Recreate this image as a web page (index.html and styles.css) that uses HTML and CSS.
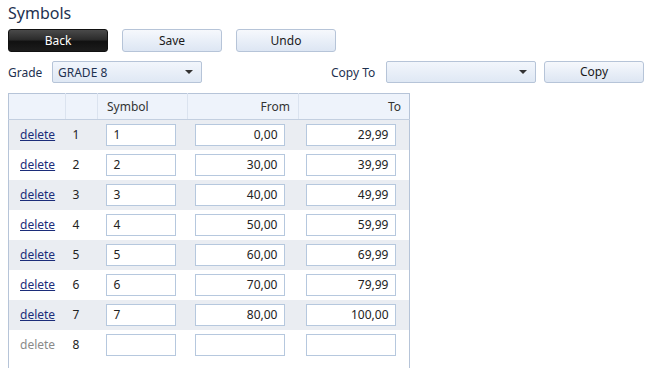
FILE: index.html
```html
<!DOCTYPE html>
<html>
<head>
<meta charset="utf-8">
<link rel="stylesheet" href="styles.css">
</head>
<body>
<div class="page">
  <div class="title">Symbols</div>
  <div class="toolbar">
    <button class="btn btn-dark">Back</button>
    <button class="btn">Save</button>
    <button class="btn">Undo</button>
  </div>
  <div class="filters">
    <span class="label label-grade">Grade</span>
    <div class="select"><span>GRADE 8</span><span class="caret"></span></div>
    <span class="label label-copy">Copy To</span>
    <div class="select"><span></span><span class="caret"></span></div>
    <button class="btn btn-copy">Copy</button>
  </div>
  <table class="grid">
    <thead>
      <tr>
        <th class="c-del"></th>
        <th class="c-num"></th>
        <th class="c-sym">Symbol</th>
        <th class="c-from">From</th>
        <th class="c-to">To</th>
      </tr>
    </thead>
    <tbody>
      <tr class="alt"><td class="c-del"><a href="#">delete</a></td><td class="c-num">1</td><td class="c-sym"><div class="inp">1</div></td><td class="c-from"><div class="inp num">0,00</div></td><td class="c-to"><div class="inp num">29,99</div></td></tr>
      <tr><td class="c-del"><a href="#">delete</a></td><td class="c-num">2</td><td class="c-sym"><div class="inp">2</div></td><td class="c-from"><div class="inp num">30,00</div></td><td class="c-to"><div class="inp num">39,99</div></td></tr>
      <tr class="alt"><td class="c-del"><a href="#">delete</a></td><td class="c-num">3</td><td class="c-sym"><div class="inp">3</div></td><td class="c-from"><div class="inp num">40,00</div></td><td class="c-to"><div class="inp num">49,99</div></td></tr>
      <tr><td class="c-del"><a href="#">delete</a></td><td class="c-num">4</td><td class="c-sym"><div class="inp">4</div></td><td class="c-from"><div class="inp num">50,00</div></td><td class="c-to"><div class="inp num">59,99</div></td></tr>
      <tr class="alt"><td class="c-del"><a href="#">delete</a></td><td class="c-num">5</td><td class="c-sym"><div class="inp">5</div></td><td class="c-from"><div class="inp num">60,00</div></td><td class="c-to"><div class="inp num">69,99</div></td></tr>
      <tr><td class="c-del"><a href="#">delete</a></td><td class="c-num">6</td><td class="c-sym"><div class="inp">6</div></td><td class="c-from"><div class="inp num">70,00</div></td><td class="c-to"><div class="inp num">79,99</div></td></tr>
      <tr class="alt"><td class="c-del"><a href="#">delete</a></td><td class="c-num">7</td><td class="c-sym"><div class="inp">7</div></td><td class="c-from"><div class="inp num">80,00</div></td><td class="c-to"><div class="inp num">100,00</div></td></tr>
      <tr><td class="c-del"><span class="disabled">delete</span></td><td class="c-num">8</td><td class="c-sym"><div class="inp"></div></td><td class="c-from"><div class="inp num"></div></td><td class="c-to"><div class="inp num"></div></td></tr>
      <tr class="spacer"><td colspan="5"></td></tr>
    </tbody>
  </table>
</div>
</body>
</html>
```

FILE: styles.css
```css
* { box-sizing: border-box; }
html, body { margin: 0; padding: 0; background: #ffffff; }
body {
  font-family: "Noto Sans", "Open Sans", "DejaVu Sans", sans-serif;
  font-size: 12px;
  color: #222;
}
.page { padding: 0 8px; }
.title {
  font-size: 16px;
  color: #1e3150;
  height: 29px;
  line-height: 26px;
}
.toolbar {
  display: flex;
  gap: 14px;
  height: 32px;
}
.btn {
  width: 100px;
  height: 23px;
  border: 1px solid #b6c4d8;
  border-radius: 3px;
  background: linear-gradient(#f6f8fc 0%, #e9eff8 50%, #dde6f3 100%);
  font-family: inherit;
  font-size: 12px;
  color: #1a1a1a;
  padding: 0;
  line-height: 20px;
}
.btn-dark {
  background: linear-gradient(#4a4a4a 0%, #2c2c2c 45%, #111 55%, #1c1c1c 100%);
  border-color: #111;
  color: #fff;
}
.filters {
  display: flex;
  align-items: center;
  height: 22px;
  margin-bottom: 10px;
}
.label { color: #1e3150; flex: none; }
.label-grade { width: 44px; }
.label-copy { width: 55px; margin-left: 129px; }
.select {
  display: flex;
  align-items: center;
  justify-content: space-between;
  width: 150px;
  height: 22px;
  border: 1px solid #b6c4d8;
  border-radius: 2px;
  background: linear-gradient(#f2f6fc, #dfe8f4);
  padding: 0 8px 0 5px;
  color: #1e3150;
}
.btn-copy { margin-left: 8px; height: 22px; }
.caret {
  width: 0; height: 0;
  border-left: 4px solid transparent;
  border-right: 4px solid transparent;
  border-top: 4px solid #333;
}
.grid {
  border-collapse: collapse;
  width: 402px;
  border: 1px solid #b6c4d8;
  border-bottom: none;
  table-layout: fixed;
}
.grid th {
  height: 26px;
  background: #eef3fb;
  font-weight: normal;
  color: #333;
  border-bottom: 1px solid #c3cfe0;
  border-left: 1px solid #dbe3ef;
  padding: 0;
  text-align: left;
  vertical-align: middle;
}
.grid th:first-child { border-left: none; }
.grid td { height: 30px; padding: 0; vertical-align: middle; }
.grid tr.alt td { background: #eaedf2; }
.c-del { width: 57px; padding-left: 11px !important; }
.c-num { width: 32px; padding-left: 7px !important; color: #222; }
.c-sym { width: 90px; padding-left: 8px !important; }
.c-from { width: 111px; padding-left: 7px !important; }
.c-to { width: 111px; padding-left: 7px !important; }
.grid th.c-sym { padding-left: 9px !important; }
.grid th.c-from { text-align: right; padding-right: 8px; }
.grid th.c-to { text-align: right; padding-right: 8px; }
.grid th.c-del, .grid th.c-num { padding: 0 !important; }
a { color: #1c2d7a; text-decoration: underline; }
.disabled { color: #8a8a8a; }
.inp {
  height: 22px;
  border: 1px solid #b6c8de;
  background: #fff;
  line-height: 20px;
  padding: 0 7px;
  color: #222;
}
.c-sym .inp { width: 70px; }
.c-from .inp, .c-to .inp { width: 90px; }
.inp.num { text-align: right; padding-right: 6px; }
.grid tr.spacer td { height: 10px; }
```
